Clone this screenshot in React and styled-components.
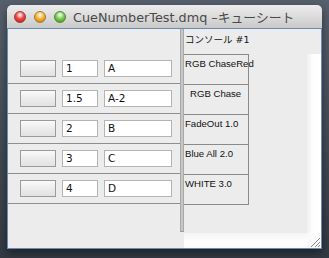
import styled, { createGlobalStyle } from "styled-components";

const GlobalStyle = createGlobalStyle`
  html, body {
    margin: 0;
    padding: 0;
  }
  body {
    width: 329px;
    height: 258px;
    overflow: hidden;
    background: linear-gradient(180deg, #56606d 0%, #414954 60%, #343a43 100%);
    font-family: "DejaVu Sans", "Liberation Sans", sans-serif;
  }
`;

const Desktop = styled.div`
  width: 329px;
  height: 258px;
  padding: 5px 0 0 7px;
  box-sizing: border-box;
`;

const Window = styled.div`
  width: 315px;
  height: 244px;
  display: flex;
  flex-direction: column;
  box-shadow: 0 4px 10px rgba(0, 0, 0, 0.45);
  border-radius: 5px 5px 0 0;
`;

const TitleBar = styled.div`
  height: 23px;
  flex: none;
  display: flex;
  align-items: center;
  padding-left: 7px;
  gap: 8px;
  border-radius: 5px 5px 0 0;
  background: linear-gradient(180deg, #ececec 0%, #dadada 55%, #c9c9c9 100%);
`;

const Light = styled.span`
  width: 12px;
  height: 12px;
  border-radius: 50%;
  box-sizing: border-box;
  border: 1px solid ${(p) => p.$edge};
  background: radial-gradient(circle at 50% 30%, #fff 0%, ${(p) => p.$color} 45%, ${(p) => p.$dark} 100%);
`;

const Title = styled.div`
  margin-left: -1px;
  font-size: 12.8px;
  color: #4a4a4a;
  white-space: nowrap;
  font-family: "DejaVu Sans", "Noto Sans CJK JP", sans-serif;
`;

const Content = styled.div`
  flex: 1;
  border: 1px solid #6a8cb3;
  background: #ececec;
  display: grid;
  grid-template-columns: 172px 4px 1fr;
  overflow: hidden;
`;

const LeftPanel = styled.div`
  padding-top: 25px;
  display: flex;
  flex-direction: column;
`;

const Row = styled.div`
  height: 29px;
  border-bottom: 1px solid #8e8e8e;
  display: flex;
  align-items: center;
  padding-left: 12px;
  gap: 6px;
`;

const CueButton = styled.div`
  width: 34px;
  height: 15px;
  border: 1px solid #9a9a9a;
  background: linear-gradient(180deg, #fafafa 0%, #ececec 50%, #e2e2e2 100%);
`;

const Field = styled.div`
  width: ${(p) => p.$w}px;
  height: 15px;
  border: 1px solid #b4b4b4;
  background: #fff;
  font-size: 10.5px;
  line-height: 15px;
  padding-left: 3px;
  color: #111;
  font-family: "DejaVu Sans", sans-serif;
`;

const Splitter = styled.div`
  height: 203px;
  background: #c6c6c6;
  border-left: 1px solid #a8a8a8;
  border-right: 1px solid #a8a8a8;
  border-bottom: 1px solid #999;
  box-sizing: border-box;
`;

const RightPanel = styled.div`
  display: grid;
  grid-template-columns: 1fr 14px;
  grid-template-rows: 25px 1fr 15px;
`;

const Header = styled.div`
  grid-column: 1 / 3;
  font-size: 9.5px;
  padding: 3px 0 0 1px;
  color: #111;
  font-family: "DejaVu Sans", "Noto Sans CJK JP", sans-serif;
`;

const Cells = styled.div`
  display: flex;
  flex-direction: column;
  align-items: flex-start;
`;

const Cell = styled.div`
  width: 65px;
  height: ${(p) => (p.$first ? 31 : 30)}px;
  border-top: ${(p) => (p.$first ? "1px solid #8a8a8a" : "none")};
  border-bottom: 1px solid #8a8a8a;
  border-right: 1px solid #8a8a8a;
  font-size: 9.6px;
  font-family: "Liberation Sans", sans-serif;
  padding: 3px 0 0 ${(p) => p.$indent}px;
  box-sizing: border-box;
  color: #111;
  white-space: nowrap;
`;

const VScroll = styled.div`
  background: linear-gradient(90deg, #f0f0f0 0%, #fdfdfd 40%, #ffffff 100%);
`;

const HScroll = styled.div`
  background: linear-gradient(180deg, #f4f4f4 0%, #ffffff 60%, #fbfbfb 100%);
`;

const Grip = styled.div`
  background: #fafafa;
  display: flex;
  align-items: flex-end;
  justify-content: flex-end;
`;

const rows = [
  ["1", "A"],
  ["1.5", "A-2"],
  ["2", "B"],
  ["3", "C"],
  ["4", "D"],
];

const cells = [
  ["RGB ChaseRed", 1],
  ["RGB Chase", 6],
  ["FadeOut 1.0", 1],
  ["Blue All 2.0", 1],
  ["WHITE 3.0", 1],
];

export default function App() {
  return (
    <>
      <GlobalStyle />
      <Desktop>
        <Window>
          <TitleBar>
            <Light $color="#ee4a44" $dark="#a51d18" $edge="#9e3a36" />
            <Light $color="#f4b53c" $dark="#b9770f" $edge="#a7782c" />
            <Light $color="#7fcc55" $dark="#3d8a1c" $edge="#4f8a35" />
            <Title>CueNumberTest.dmq –キューシート</Title>
          </TitleBar>
          <Content>
            <LeftPanel>
              {rows.map(([num, name]) => (
                <Row key={num}>
                  <CueButton />
                  <Field $w={31}>{num}</Field>
                  <Field $w={63}>{name}</Field>
                </Row>
              ))}
            </LeftPanel>
            <Splitter />
            <RightPanel>
              <Header>コンソール #1</Header>
              <Cells>
                {cells.map(([label, indent], i) => (
                  <Cell key={label} $first={i === 0} $indent={indent}>
                    {label}
                  </Cell>
                ))}
              </Cells>
              <VScroll />
              <HScroll />
              <Grip>
                <svg width="14" height="14" viewBox="0 0 14 14">
                  <path d="M13 4 L4 13 M13 8 L8 13 M13 11 L11 13" stroke="#8a8a8a" strokeWidth="1" />
                </svg>
              </Grip>
            </RightPanel>
          </Content>
        </Window>
      </Desktop>
    </>
  );
}
